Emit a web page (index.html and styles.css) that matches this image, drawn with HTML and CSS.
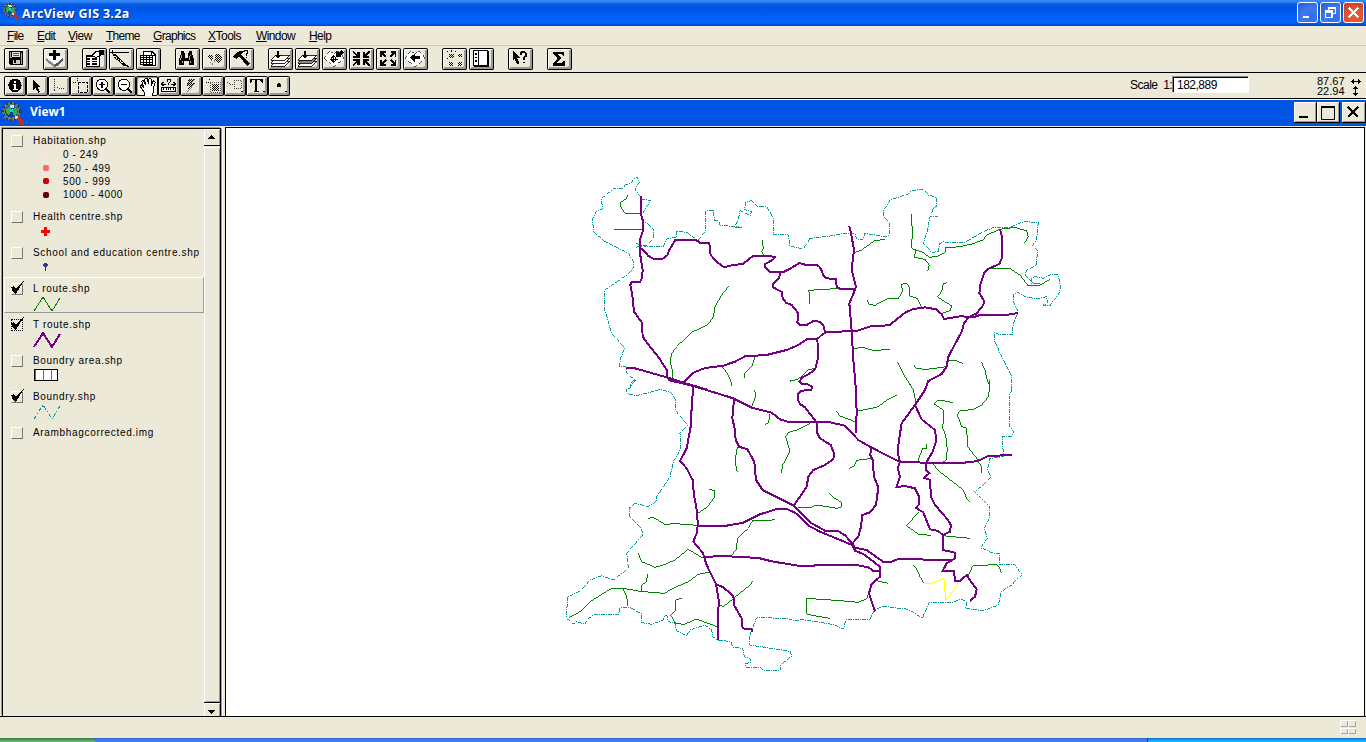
FILE: index.html
```html
<!DOCTYPE html>
<html lang="en">
<head>
<meta charset="utf-8">
<title>ArcView GIS 3.2a</title>
<link rel="stylesheet" href="styles.css">
</head>
<body>
<svg class="defs" width="0" height="0">
  <defs>
    <pattern id="dots" width="6" height="6" patternUnits="userSpaceOnUse"><path d="M0 0h3v3h-3zM3 3h3v3h-3z"/></pattern>
    <symbol id="globe" viewBox="0 0 22 22">
      <circle cx="10" cy="9" r="9" fill="#6d7275"/>
      <circle cx="10" cy="9" r="8" fill="none" stroke="#34383a" stroke-width="2" stroke-dasharray="2 2"/>
      <circle cx="10" cy="9" r="6" fill="#1238a8"/>
      <path d="M5 7l3-3 2 2-1 4-2 3-2-3zM11 8l3-3 2 3-2 6-3-2z" fill="#25b63c"/>
      <path d="M8 3l4 0 1 2-3 1z" fill="#c8efe8"/>
      <path d="M9 7h2v3h-2z" fill="#19c8f0"/>
      <path d="M14 15l3-2 5 6v3h-3z" fill="#b8321a"/>
      <path d="M13 13l4 1-3 3z" fill="#ddd"/>
    </symbol>
    <symbol id="tick" viewBox="0 0 15 15"><path d="M1 6l3-1 2 3 7-8h1l-7 11-2 2-2-2z"/></symbol>
  </defs>
</svg>

<header class="titlebar">
  <svg class="app-icon" viewBox="0 0 22 22"><use href="#globe"/></svg>
  <span class="app-name">ArcView GIS 3.2a</span>
  <div class="xp-buttons">
    <span class="xp"><svg viewBox="0 0 21 21"><path d="M5 14h7v3h-7z" fill="#fff"/></svg></span>
    <span class="xp"><svg viewBox="0 0 21 21"><path d="M8 9v-4h8v7h-3M8 6h8" fill="none" stroke="#fff" stroke-width="1.4"/><path d="M5 9h7v7h-7zM5 10h7" fill="none" stroke="#fff" stroke-width="1.5"/></svg></span>
    <span class="xp close"><svg viewBox="0 0 21 21"><path d="M5.500 5.500l10 10M15.500 5.500l-10 10" stroke="#fff" stroke-width="2.300"/></svg></span>
  </div>
</header>

<nav class="menu">
  <span class="m1"><u>F</u>ile</span><span class="m2"><u>E</u>dit</span><span class="m3"><u>V</u>iew</span><span class="m4"><u>T</u>heme</span><span class="m5"><u>G</u>raphics</span><span class="m6"><u>X</u>Tools</span><span class="m7"><u>W</u>indow</span><span class="m8"><u>H</u>elp</span>
</nav>

<div class="toolbar buttons">
  <div class="group">
    <span class="btn"><svg viewBox="12 144 75 66"><path d="M27 154h41v41h-38l-3-3z"/><path d="M35 157h24v14h-24z" fill="#ece9d8"/><path d="M39 161h17M39 166h17" stroke="#000" stroke-width="2"/><path d="M32 157v16h4M64 160v32" stroke="#aaa" stroke-width="3" fill="none"/><path d="M39 180h21v12h-21z" fill="#ccc"/><path d="M42 180h6v10h-6z"/></svg></span>
  </div>
  <div class="group">
    <span class="btn"><svg viewBox="129 144 75 66"><path d="M138 174l27 20v9l-27-20z" fill="#888"/><path d="M165 194l24-20v9l-24 20z" fill="#555"/><path d="M138 172l12-8 15 8 12-8 12 8-24 21z" fill="#fff"/><path d="M159 150h10v9h11v9h-11v11h-10v-11h-12v-9h12z"/></svg></span>
  </div>
  <div class="group">
    <span class="btn"><svg viewBox="246 144 75 66"><path d="M258 165h39v33h-39z" fill="#fff" stroke="#000" stroke-width="3"/><path d="M258 165h21v6h-21z"/><path d="M262 177h9M276 177h14M262 184h9M276 184h14M262 191h9M276 191h14" stroke="#000" stroke-width="5"/><path d="M276 166l12-12h9l3 12-12 6z" fill="#fff" stroke="#000" stroke-width="3"/><path d="M296 151h17v15h-14z"/></svg></span>
    <span class="btn"><svg viewBox="327 144 75 66"><path d="M336 151v12M330 157h57" stroke="#000" stroke-width="3"/><path d="M336 160l12 3 24 23 12 14-17-6-25-22z"/><path d="M344 168l24 22" stroke="#fff" stroke-width="4" stroke-dasharray="4 3"/><path d="M369 195l18 4" stroke="#000" stroke-width="3"/></svg></span>
    <span class="btn"><svg viewBox="408 144 75 66"><path d="M429 153h26l12 12v30h-38z" fill="#fff" stroke="#000" stroke-width="3"/><path d="M454 154v12h12" fill="none" stroke="#000" stroke-width="3"/><path d="M421 165h36v27h-36z" fill="#fff" stroke="#000" stroke-width="3"/><path d="M421 172h36M421 179h36M421 186h36M430 165v27M439 165v27M448 165v27" stroke="#000" stroke-width="3"/></svg></span>
  </div>
  <div class="group">
    <span class="btn"><svg viewBox="525 144 75 66"><path d="M543 153h9v6h3v15h9v-15h3v-6h9v9l6 15v19h-15v-14h-15v14h-15v-19l6-15z"/><path d="M546 164l-5 15M571 164l-4 15M546 182v8M571 182v8" stroke="#fff" stroke-width="2"/></svg></span>
    <span class="btn"><svg viewBox="606 144 75 66"><path d="M624 165h9l6 6v9h-6l-9-6zM645 162h9l12 9v6l-12 12-9-6z" fill="url(#dots)"/><path d="M636 171l12-5M636 177l-6 12M645 180l-9 15" stroke="#333" stroke-width="2" stroke-dasharray="3 2"/></svg></span>
    <span class="btn"><svg viewBox="687 144 75 66"><path d="M699 171l12-13 15-7 6 4-9 8 26 28-6 7-27-29-6 7-5-1z"/><path d="M734 156v-4h9v7l-4 4v4M739 171v3" fill="none" stroke="#000" stroke-width="3"/></svg></span>
  </div>
  <div class="group">
    <span class="btn"><svg viewBox="-6 69 75 66"><g class="sheet"><path d="M3 124l15-15h42l-15 15z"/><path d="M3 115l15-15h42l-15 15z"/><path d="M3 106l15-15h42l-15 15z"/></g><path d="M21 77h6v14h7l-10 11-10-11h7z"/></svg></span>
    <span class="btn"><svg viewBox="75 69 75 66"><g class="sheet"><path d="M84 124l15-15h42l-15 15z"/><path d="M84 115l15-15h42l-15 15z" fill="#888"/><path d="M84 106l15-15h42l-15 15z"/></g><path d="M102 77h6v14h7l-10 11-10-11h7z"/></svg></span>
    <span class="btn"><svg viewBox="156 69 75 66"><path d="M162 99l17-20 13 7 13-7 18 20-31 26z" fill="#fff" stroke="#000" stroke-width="2" stroke-dasharray="3 2"/><circle cx="191" cy="102" r="7" fill="none" stroke="#000" stroke-width="3"/><path d="M191 90v24M179 102h24" stroke="#000" stroke-width="3"/><path d="M198 76l7 6 10-6 7 7-10 9 4 5h-18z"/></svg></span>
    <span class="btn"><svg viewBox="237 69 75 66"><path d="M250 77l12 11v-8h7v18h-19v-6h7l-10-11zM298 77l-12 11v-8h-7v18h19v-6h-7l10-11zM250 124l12-11v8h7v-18h-19v6h7l-10 11zM298 124l-12-11v8h-7v-18h19v6h-7l10 11z"/></svg></span>
    <span class="btn"><svg viewBox="318 69 75 66"><path d="M330 77h17v6h-7l10 11-5 4-10-11v8h-5zM379 77h-17v6h7l-10 11 5 4 10-11v8h5zM330 123h17v-6h-7l10-11-5-4-10 11v-8h-5zM379 123h-17v-6h7l-10-11 5-4 10 11v-8h5z"/></svg></span>
    <span class="btn"><svg viewBox="399 69 75 66"><path d="M405 99l17-20 13 7 13-7 18 20-31 27z" fill="#fff" stroke="#000" stroke-width="2" stroke-dasharray="3 2"/><path d="M420 98l15-13v9h14v9h-14v9z"/></svg></span>
  </div>
  <div class="group">
    <span class="btn"><svg viewBox="516 69 75 66"><path d="M538 86h15v13h-15zM565 86h10v10h-10zM538 110h10v12h-10zM565 110h10v12h-10z" fill="url(#dots)"/><path d="M532 77v4M543 75v5M556 77v5M532 98v4" stroke="#000" stroke-width="3"/></svg></span>
    <span class="btn"><svg viewBox="597 69 75 66"><path d="M611 77h42v44h-42z" fill="#fff" stroke="#000" stroke-width="3"/><path d="M624 78v42M655 78v45h-43" fill="none" stroke="#000" stroke-width="3"/><path d="M616 84h5v5h-5zM616 95h5v5h-5zM616 106h5v5h-5z"/></svg></span>
  </div>
  <div class="group">
    <span class="btn"><svg viewBox="714 69 75 66"><path d="M729 77l21 21h-9l7 17-7 3-7-16-5 6z"/><path d="M752 91v-6l4-4h8l4 4v8l-7 5v7M761 110v5" fill="none" stroke="#000" stroke-width="5"/></svg></span>
  </div>
  <div class="group">
    <span class="btn"><svg viewBox="831 69 75 66"><path d="M849 80h34v12h-5l-4-5h-13l13 13-14 14h15l4-6h5v14h-36v-6l15-16-14-14z"/></svg></span>
  </div>
</div>

<div class="toolbar tools">
  <div class="toolset">
    <span class="btn"><svg viewBox="12 228 66 60"><circle cx="45" cy="256" r="20"/><path d="M42 243h7v6h-7zM39 252h10v15h4v4h-15v-4h4v-11h-3z" fill="#fff"/></svg></span>
    <span class="btn"><svg viewBox="78 228 66 60"><path d="M98 238l26 24h-11l8 14-6 3-8-15-9 9z"/></svg></span>
    <span class="btn"><svg viewBox="144 228 66 60"><path d="M163 236v36M163 272l10-9 6 3h12" fill="none" stroke="#333" stroke-width="3" stroke-dasharray="3 3"/></svg></span>
    <span class="btn"><svg viewBox="210 228 66 60"><path d="M219 246h9M232 234v9" stroke="#000" stroke-width="3" stroke-dasharray="3 3"/><path d="M234 247h29v29h-29z" fill="none" stroke="#000" stroke-width="3" stroke-dasharray="9 3"/></svg></span>
    <span class="btn"><svg viewBox="276 228 66 60"><circle cx="306" cy="254" r="17" fill="#fff" stroke="#000" stroke-width="3"/><path d="M297 254h18M306 245v18" stroke="#000" stroke-width="4"/><path d="M318 266l12 12" stroke="#000" stroke-width="7"/></svg></span>
    <span class="btn"><svg viewBox="342 228 66 60"><circle cx="372" cy="254" r="17" fill="#fff" stroke="#000" stroke-width="3"/><path d="M363 254h18" stroke="#000" stroke-width="4"/><path d="M384 266l12 12" stroke="#000" stroke-width="7"/></svg></span>
    <span class="btn active"><svg viewBox="408 228 66 60"><path d="M433 278l-12-19 3-4 8 7-7-18 5-3 6 13-2-17 7-2 4 16 2-15 6 0 2 18 5-12 6 4-5 16v14l-5 6v6h-23z" fill="#fff" stroke="#000" stroke-width="3"/></svg></span>
    <span class="btn"><svg viewBox="474 228 66 60"><path d="M485 262h42v12h-42z" fill="#fff" stroke="#000" stroke-width="3"/><path d="M491 264v5M498 264v5M505 264v5M512 264v5M519 264v5M485 252h14M513 252h14M491 246l-6 6 6 6M521 246l6 6-6 6M501 246v-8h9v8l-4 4v5" fill="none" stroke="#000" stroke-width="3"/></svg></span>
    <span class="btn"><svg viewBox="540 228 66 60"><path d="M565 237h20l-10 12h9l-23 27 7-18h-9z" fill="url(#dots)"/><path d="M571 236l-9 20M584 237l-10 12M584 250l-22 26" stroke="#333" stroke-width="2"/></svg></span>
    <span class="btn"><svg viewBox="606 228 66 60"><path d="M618 246h9M628 236v6" stroke="#000" stroke-width="3" stroke-dasharray="3 3"/><path d="M630 246h30v30h-30z" fill="none" stroke="#000" stroke-width="2" stroke-dasharray="3 3"/><path d="M636 252h21v21h-21z" fill="url(#dots)"/></svg></span>
    <span class="btn"><svg viewBox="672 228 66 60"><path d="M681 246l15 9 8-9M702 242h23v22h-23z" fill="none" stroke="#222" stroke-width="2.500" stroke-dasharray="3 3"/><path d="M723 273h8l-4 5z"/></svg></span>
    <span class="btn"><svg viewBox="738 228 66 60"><path d="M750 237h38v11h-3l-4-7h-9v31l5 2v3h-16v-3l5-2v-31h-9l-4 7h-3zM789 273h8l-4 5z"/></svg></span>
    <span class="btn"><svg viewBox="804 228 66 60"><circle cx="837" cy="256" r="6"/><path d="M855 273h8l-4 5z"/></svg></span>
  </div>
  <div class="scale"><span>Scale&nbsp; 1:</span><div class="field">182,889</div></div>
  <div class="coords">
    <div>87.67</div><div>22.94</div>
  </div>
  <svg class="arrows" viewBox="0 0 10 22"><path d="M0 6h1v-1h1v-1h1v2h4v-2h1v1h1v1h1v1h-1v1h-1v1h-1v-2h-4v2h-1v-1h-1v-1h-1zM4 11h1v1h1v1h1v1h-2v4h2v1h-1v1h-1v1h-1v-1h-1v-1h-1v-1h2v-4h-2v-1h1v-1h1z"/></svg>
</div>

<div class="viewbar">
  <svg class="view-icon" viewBox="0 0 22 22"><use href="#globe"/></svg>
  <span class="view-name">View1</span>
  <div class="view-buttons">
    <span class="cb"><svg viewBox="0 0 23 21"><path d="M5 14h9v2h-9z"/></svg></span>
    <span class="cb"><svg viewBox="0 0 23 21"><path d="M4 4h14v14h-14zM5 6v11h12v-11z" fill-rule="evenodd"/></svg></span>
    <span class="cb last"><svg viewBox="0 0 23 21"><path d="M6 5l10 10M16 5l-10 10" stroke="#000" stroke-width="2.500"/></svg></span>
  </div>
</div>

<main class="workspace">
  <aside class="panel">
    <div class="legend">
      <section class="theme first">
        <div class="head"><i class="box"></i><span>Habitation.shp</span></div>
        <div class="class c1"><i></i>0 - 249</div>
        <div class="class c2"><i></i>250 - 499</div>
        <div class="class c3"><i></i>500 - 999</div>
        <div class="class c4"><i></i>1000 - 4000</div>
      </section>
      <section class="theme">
        <div class="head"><i class="box"></i><span>Health centre.shp</span></div>
        <svg class="sym" viewBox="0 0 30 18"><path d="M11 4h3v3h3v3h-3v3h-3v-3h-3v-3h3z" fill="#f00"/></svg>
      </section>
      <section class="theme">
        <div class="head"><i class="box"></i><span>School and education centre.shp</span></div>
        <svg class="sym" viewBox="0 0 30 18"><path d="M11 4h3v1h1v2h-1v1h-1v4h-1v-4h-1v-1h-1v-2h1z" fill="#293c84"/></svg>
      </section>
      <section class="theme selected">
        <div class="head"><i class="box"><svg class="tick"><use href="#tick"/></svg></i><span>L route.shp</span></div>
        <svg class="sym" viewBox="0 0 30 18"><path d="M1 16L10 2 19 16 27 3" fill="none" stroke="#008200"/></svg>
      </section>
      <section class="theme">
        <div class="head"><i class="box focus"><svg class="tick"><use href="#tick"/></svg></i><span>T route.shp</span></div>
        <svg class="sym" viewBox="0 0 30 18"><path d="M1 16L10 2 19 16 27 3" fill="none" stroke="#730082" stroke-width="2"/></svg>
      </section>
      <section class="theme">
        <div class="head"><i class="box"></i><span>Boundry area.shp</span></div>
        <svg class="sym" viewBox="0 0 30 18"><path d="M1.500 2.500h23v11h-23z" fill="#fff" stroke="#000"/><path d="M2.500 3v10M10.500 3v10M18.500 3v10" stroke="#00b600"/></svg>
      </section>
      <section class="theme">
        <div class="head"><i class="box"><svg class="tick"><use href="#tick"/></svg></i><span>Boundry.shp</span></div>
        <svg class="sym" viewBox="0 0 30 18"><path d="M1 16L10 2 19 16 27 3" fill="none" stroke="#009a9a" stroke-dasharray="4 2 1 2"/></svg>
      </section>
      <section class="theme">
        <div class="head"><i class="box"></i><span>Arambhagcorrected.img</span></div>
      </section>
    </div>
    <div class="scrollbar">
      <div class="arrow up"><svg viewBox="0 0 15 15"><path d="M4 9h7v-1h-1v-1h-1v-1h-1v-1h-1v1h-1v1h-1v1h-1z"/></svg></div>
      <div class="thumb"></div>
      <div class="arrow down"><svg viewBox="0 0 15 15"><path d="M4 7h7v1h-1v1h-1v1h-1v1h-1v-1h-1v-1h-1v-1h-1z"/></svg></div>
    </div>
  </aside>
  <div class="map">
    <svg viewBox="226 128 1138 588" width="1138" height="588">
      <g class="boundary">
        <path transform="translate(580 170) scale(.33333)" d="M182 80L165 60 168 50 178 38 172 22 160 28 155 38 135 45 130 55 100 57 65 85 67 118 50 122 38 145 40 185 75 215 145 250 160 275 162 292 145 312 75 360 73 415 95 490 135 535 122 562 118 588 138 590 140 610 165 630 150 655 138 660M690 205L670 237 630 228 625 195 582 195 580 145 560 110 530 108 515 92 498 95 493 118 515 125 510 137 480 122 475 150 463 172 485 172 420 165 418 152 403 150 400 120 378 122 376 185 355 210 345 205 320 187 290 183 290 203 262 205 250 230 195 230 168 220M168 232L200 225 220 205 222 180 200 158 190 155M188 130L212 92 182 87"/>
        <path transform="translate(560 380) scale(.33333)" d="M228 0L215 5 210 22 198 30 205 42 230 47 265 38 300 28 333 38 348 60 345 90 383 135 360 160 363 205 340 245 330 290 290 350 288 365 265 380 225 370 207 385 210 412 245 445 248 465 200 520 205 565 160 600 125 587 90 600 65 630 22 652 20 715 40 732 50 725 75 733 80 720 100 705 175 705 180 683 210 683 243 700 245 728 275 733 310 720 313 708 322 708 325 725 345 730 350 752 380 767 390 750 435 735 455 750 458 770 474 780 512 785 520 802 548 805 553 830 573 838 570 848 557 850 558 862 600 862 610 870 660 871 662 855 695 828 690 814 665 810 570 795 570 765 577 745 590 713 680 715 700 723 720 720"/>
        <path transform="translate(800 380) scale(.33333)" d="M0 718L50 725 105 735 130 747 138 720 210 717 225 688 250 679 325 688 368 715 372 703 388 668 460 667 480 658 500 663 497 685 550 692 595 675 603 635 635 615 665 583 655 570 645 555 600 555 600 522 575 518 542 503 562 475 553 445 570 410 570 380 523 335 550 315 573 292 562 270 570 235 610 230 612 215 607 200 607 170 635 168 640 155 630 140 627 50 635 30"/>
        <path transform="translate(810 170) scale(.33333)" d="M605 660L605 620 575 560 555 515 553 487 565 493 607 495 610 460 625 425 612 400 612 372 625 367 645 380 680 387 710 380 712 400 700 405 720 408 730 390 745 375 752 355 745 315 720 315 700 325 675 320 665 325 665 342 690 342 670 340 645 315 650 300 680 285 682 240 668 228 680 205 685 157 640 155 600 172 550 172 510 190 465 217 400 216 388 222 386 245 365 247 340 220 350 190 360 140 385 140M365 130L370 112 380 110 378 82 355 75 340 58 305 62 295 72 240 90 222 120 222 142 238 155 238 195 225 200 165 190 158 210 140 208 135 192 100 190 70 197 0 205"/>
      </g>
      <g class="local">
        <path transform="translate(580 170) scale(.33333)" d="M142 75L140 85 122 97 122 110 135 130 182 130M102 178H188M547 210L550 235 545 245 557 262M448 347L425 375 405 410 400 440 385 463 335 487 290 530 275 550 270 575 277 600 277 628M526 557L515 590 495 610 493 623M425 588L445 615 453 635 455 648M750 357L686 361 690 385 690 402M630 634L655 627 685 600 706 595"/>
        <path transform="translate(810 170) scale(.33333)" d="M60 356L135 357M135 247L155 240 195 211 225 209M303 132L307 180 305 235 340 248 358 262 385 258 405 248 406 234 450 230 485 222 520 210 530 195 570 178 615 172 650 183 655 200 643 220M318 240L313 262 345 268 358 285 353 303M172 390L176 403 195 406 230 387 265 386 277 365 275 343 290 340 300 355 300 378 322 385 335 412M412 337L400 342 395 365 382 380 400 392 425 408 420 422 395 430M530 296L600 296 630 315 655 348 685 348 720 328M130 535L160 533 190 541 240 539M262 576L285 620 310 660 320 705M312 586L320 596 350 598 410 590M418 570L440 573 458 580M514 576L525 600 530 625 538 645 538 660"/>
        <path transform="translate(800 380) scale(.33333)" d="M322 0L340 30 350 75M568 0L568 30 565 50 545 75 520 88 480 93 472 105 485 140 500 145 503 200 530 235 545 262 545 280M292 45L265 58 230 82 175 93M110 93L120 108 165 125M215 235L170 241 163 258 148 265M380 192L380 205 367 207 352 248M458 68L430 62 415 60 403 72 432 92 428 145 437 165 442 210 438 240 425 250M400 250L410 268 490 330 500 355 512 367M88 340L100 352 125 367 125 380 110 385 50 375 30 384 -5 384M357 395L320 437 355 463 392 466M428 467L510 475M225 601L265 610M205 640L202 655 175 667 120 662 20 655 20 703 90 715M340 556L352 570 360 590 373 612M505 588L518 557 590 554 597 560 605 580"/>
        <path transform="translate(560 380) scale(.33333)" d="M584 30L588 48 575 80M512 0L515 18M690 3L705 0M630 102L625 130 615 133M750 130L710 150 685 158 677 170 690 215 668 255 664 280M532 200L525 245 532 277M448 328L465 332 465 350 440 383 412 400M265 415L280 412 315 433 345 431 412 436M235 520L245 545 285 562 310 555 345 540 385 508 430 535M645 419L630 421 578 421 565 445 533 475 528 510 512 530M28 713L60 695 95 662 155 625 195 626 240 634 312 640 350 620 385 605 415 583 450 576M262 583L260 605 245 615 243 633M190 628L200 650 204 677M365 655L348 660 347 690 332 705 345 728 370 734 410 717 435 727 472 740M580 602L570 615 490 680 478 675"/>
      </g>
      <path class="highlight" transform="translate(800 380) scale(.33333)" d="M373 612L400 608 432 595 437 660 473 615 470 600"/>
      <g class="trunk">
        <path transform="translate(580 170) scale(.33333)" d="M182 78L182 130 188 150 188 185 180 210 180 250 188 300 186 325 180 335 155 336 151 345 157 375 162 425 186 458 188 500 210 530 238 565 260 600 260 622M180 236L188 238 205 258 222 267 248 266 262 256 268 240 286 210 348 210 360 218 388 220 392 255 410 275 432 292 450 287 490 281 520 257 585 260 580 268 556 282 556 292 570 306 610 306 632 295 658 279 675 284 712 284M600 306L598 322 580 342 580 352 605 366 608 385 618 398 635 405 655 430 652 458 660 465 680 465 700 453 718 455 730 465 735 487M138 593L165 595 260 622 310 638 385 660M310 638L340 608 375 594 430 587 465 575 495 559 560 555 620 540 655 525 680 508 712 507 725 495 738 487M712 508L715 560 706 597 690 610 668 622 658 635 665 642 682 642 696 650 694 660 665 662 655 670 653 688 660 702 675 712 708 755"/>
        <path transform="translate(810 170) scale(.33333)" d="M20 284L28 290 33 297 40 315 50 325 78 327 80 350 90 356 135 359M44 487L128 483 140 483 185 468 238 466 285 428 310 417 345 412 378 418 395 432 402 447 455 438 475 442 495 440 510 435 595 434 625 429M118 168L125 200 132 240 125 298 138 350 130 372 118 400 125 483 130 570 138 660 140 730 137 790M570 178L577 205 575 265 568 282 535 296 522 310 512 340 508 370 522 392 520 405 500 430 475 442 462 460 455 485 415 560 410 590 395 612 355 633 345 660 315 705"/>
        <path transform="translate(800 380) scale(.33333)" d="M345 75L305 130 297 180 293 215 300 248M345 75L365 118 405 150 409 182 398 215 380 245 378 270 388 280 372 293 390 300 393 350 405 375 440 415 453 435 450 455 428 465M296 248L295 270 300 290 290 320 320 319 345 325 357 350 357 373 348 384 370 397 390 448 415 453 428 465 428 510 465 518 465 535 440 550 428 572 462 572 465 603 480 603 500 585 515 608 530 628 525 650 510 663M0 125L90 127 135 137 175 180 215 203 298 245 420 250 512 247 540 240 565 228 635 225M50 127L50 155 60 175 92 195 102 220 100 238 75 255 40 270 25 290 20 320 0 350 -20 378M213 203L211 225 218 240 222 290 235 322 228 375 210 397 187 405 183 440 175 470 157 490M-20 376L0 395 30 427 75 452 115 453 135 466 157 490 165 503 200 510 250 546 275 545 295 537 350 538 455 541M0 410L25 437 60 455 157 495 165 512 190 522 240 560 240 590 215 612 207 640 225 695M0 558L90 555 165 554 205 562 220 573 240 573"/>
        <path transform="translate(560 380) scale(.33333)" d="M325 0L400 18 520 55 575 83 635 98 660 118 685 126 750 125M400 18L395 80 393 135 380 205 360 243 380 265 398 300 402 345 412 400 413 437 410 460 400 485 428 518 440 555 468 612 477 665 474 700 474 780M522 60L517 115 525 150 527 180 537 200 562 208 583 245 588 300 608 330 700 376M413 437L500 437 550 428 600 403 650 387 680 387 705 398 720 410M430 531L490 528 595 534 640 545 720 558M468 613L490 622 520 648 522 675 545 715 548 745 575 748 577 755"/>
      </g>
    </svg>
  </div>
</main>

<footer class="status">
  <svg viewBox="0 0 17 15"><path d="M.5 6V.5H16M.5 14V8.500H16M8.500 1v13" stroke="#fff" fill="none"/><path d="M1 6.500h6.500V1M9 6.500h6.500V1M1 13.500h6.500V9M9 13.500h6.500V9" stroke="#aca899" fill="none"/></svg>
</footer>
<div class="taskbar"><div class="start"></div><div class="tray"></div></div>
</body>
</html>
```

FILE: styles.css
```css
* { box-sizing: border-box; }

body {
  margin: 0;
  width: 1366px;
  height: 742px;
  overflow: hidden;
  display: flex;
  flex-direction: column;
  background: #ece9d8;
  font: 12px "Liberation Sans", Arial, sans-serif;
  color: #000;
  cursor: default;
}

svg { display: block; shape-rendering: crispEdges; }
.defs { position: absolute; }

.titlebar {
  height: 26px;
  flex: none;
  display: flex;
  align-items: center;
  padding: 0 2px;
  background: linear-gradient(#2a7bf0 0, #3a93ff 1px, #0a5be0 4px, #0054e3 8px, #005cf4 15px, #0066ff 21px, #0060f5 23px, #0040c4 26px);
}
.app-icon { width: 17px; height: 17px; margin-top: -3px; }
.app-name {
  margin-left: 3px;
  font: bold 12.500px "Open Sans", sans-serif;
  letter-spacing: 0.3px;
  color: #fff;
  text-shadow: 1px 1px #0a2a80;
}
.xp-buttons { margin-left: auto; display: flex; gap: 2px; margin-top: -1px; }
.xp {
  width: 21px;
  height: 21px;
  border: 1px solid #fff;
  border-radius: 3px;
  background: radial-gradient(circle at 70% 75%, #2f6df0, #3f79ee 50%, #2455cc);
}
.xp svg { width: 19px; height: 19px; }
.xp.close { background: radial-gradient(circle at 60% 70%, #ee5a33, #e0512c 55%, #bb3a1c); }

.menu {
  height: 20px;
  flex: none;
  display: flex;
  padding: 3px 0 0 7px;
  line-height: 14px;
  border-bottom: 1px solid #c8c8c8;
  white-space: nowrap;
}
.menu u { text-underline-offset: 1px; }
.m1 { width: 30px; letter-spacing: -0.7px; }
.m2 { width: 31px; letter-spacing: -0.6px; }
.m3 { width: 38px; letter-spacing: -0.5px; }
.m4 { width: 47px; letter-spacing: -0.75px; }
.m5 { width: 55px; letter-spacing: -0.7px; }
.m6 { width: 48px; letter-spacing: -0.5px; }
.m7 { width: 53px; letter-spacing: -0.6px; }
.m8 { letter-spacing: -0.6px; }

.toolbar { flex: none; display: flex; border-bottom: 1px solid #000; }
.buttons { height: 27px; padding: 2px 4px; gap: 14px; }
.group { display: flex; gap: 2px; }
.btn {
  width: 25px;
  height: 22px;
  border-radius: 2px;
  box-shadow: inset 0 0 0 1px #000, inset 2px 2px #fff, inset -3px -3px #999;
}
.btn svg { width: 100%; height: 100%; }
.sheet path { stroke: #000; stroke-width: 2.5; }
.sheet path:not([fill]) { fill: #fff; }

.tools { height: 26px; padding: 3px 0 0 4px; }
.toolset { display: flex; }
.tools .btn { width: 22px; height: 20px; }
.tools .btn.active {
  background: repeating-conic-gradient(#fff 0 25%, #ece9d8 0 50%) 0 0 / 2px 2px;
  box-shadow: inset 0 0 0 1px #000, inset 2px 2px #999;
}
.scale { display: flex; margin-left: 840px; line-height: 18px; letter-spacing: -0.5px; }
.scale span { width: 42px; white-space: nowrap; }
.field {
  width: 77px;
  height: 17px;
  padding-left: 4px;
  line-height: 17px;
  background: #fff;
  border: 1px solid #fff;
  border-top-color: #888;
  border-left-color: #888;
  box-shadow: inset 1px 1px #000;
  letter-spacing: -0.5px;
}
.coords { margin-left: 68px; font-size: 11px; line-height: 10px; letter-spacing: 0; }
.arrows { width: 10px; height: 22px; margin-left: 6px; margin-top: -1px; }

.viewbar {
  height: 27px;
  flex: none;
  display: flex;
  align-items: center;
  border-top: 1px solid #fff;
  background: #0054e3;
  padding: 0 0 0 1px;
}
.view-icon { width: 23px; height: 23px; }
.view-name {
  margin: -3px 0 0 6px;
  font: bold 12px "Open Sans", sans-serif;
  color: #fff;
}
.view-buttons { margin-left: auto; display: flex; margin-top: -1px; }
.cb {
  width: 23px;
  height: 21px;
  background: #ece9d8;
  box-shadow: inset -1px -1px #000, inset 1px 1px #fff, inset -2px -2px #999;
}
.cb.last { margin-left: 2px; width: 24px; }
.cb svg { width: 23px; height: 21px; }

.workspace { height: 591px; flex: none; display: flex; border-bottom: 1px solid #000; padding-top: 1px; }
.panel {
  width: 219px;
  flex: none;
  margin: 1px 4px 0 2px;
  display: flex;
  border: solid #000;
  border-width: 1px 1px 0 1px;
  box-shadow: -1px -1px #999, 1px 0 #999, 2px 0 #fff;
}
.legend { flex: 1; min-width: 0; font-size: 10px; letter-spacing: 0.68px; white-space: nowrap; }
.theme { height: 36px; padding: 5px 0 0 8px; }
.theme.first { height: 76px; }
.theme.selected {
  margin: 0 0 0 1px;
  padding-left: 6px;
  padding-top: 4px;
  border: 1px solid #fff;
  border-right-color: #999;
  border-bottom-color: #999;
}
.head { display: flex; height: 13px; line-height: 14px; }
.head span { margin-left: 10px; }
.box {
  width: 12px;
  height: 12px;
  flex: none;
  margin-top: 1px;
  border: 1px solid #fff;
  border-right-color: #777;
  border-bottom-color: #777;
}
.box.focus { border: 1px dotted #000; }
.tick { width: 15px; height: 15px; margin: -3px 0 0 -2px; overflow: visible; }
.sym { width: 30px; height: 18px; margin: 0 0 0 22px; }
.class { display: flex; align-items: center; height: 13.400px; line-height: 13px; padding-left: 32px; letter-spacing: 0.6px; position: relative; top: 1px; }
.class i { width: 6px; height: 6px; border-radius: 2px; margin-right: 14px; }
.c1 i { background: #ffdfdf; }
.c2 i { background: #ff6868; }
.c3 i { background: #c80000; }
.c4 i { background: #640000; }

.scrollbar { width: 16px; flex: none; display: flex; flex-direction: column; }
.arrow { height: 17px; padding-top: 1px; box-shadow: inset 1px 1px #fff, inset -1px 0 #999; }
.arrow svg { width: 15px; height: 15px; }
.arrow.up { border-bottom: 1px solid #000; }
.thumb { flex: 1; margin-top: 1px; box-shadow: inset 1px 1px #fff, inset -1px -1px #999; }
.arrow.down { height: 14px; padding-top: 0; border-top: 1px solid #000; }

.map {
  flex: 1;
  min-width: 0;
  overflow: hidden;
  margin-right: 1px;
  background: #fff;
  border: solid #000;
  border-width: 1px 1px 0 1px;
}
.map path { fill: none; }
.boundary { stroke: #009a9a; stroke-width: 3; stroke-dasharray: 12 3 3 3; }
.local { stroke: #008200; stroke-width: 3; }
.trunk { stroke: #730082; stroke-width: 6; }
.highlight { stroke: #ff0; stroke-width: 3; }

.status { height: 21px; flex: none; display: flex; justify-content: flex-end; padding: 3px 9px 0 0; }
.status svg { width: 17px; height: 15px; }
.taskbar {
  flex: 1;
  display: flex;
  justify-content: space-between;
  background: linear-gradient(#2a62c8, #3f86ea 50%, #3b7fe4);
}
.start { width: 95px; background: linear-gradient(#2f7d33, #5aa55e 60%, #6fb573); border-radius: 0 4px 0 0; }
.tray { width: 219px; border-left: 1px solid #0b3a80; background: linear-gradient(#0f62c8, #18a6f0 50%, #18b4f2); }
```
